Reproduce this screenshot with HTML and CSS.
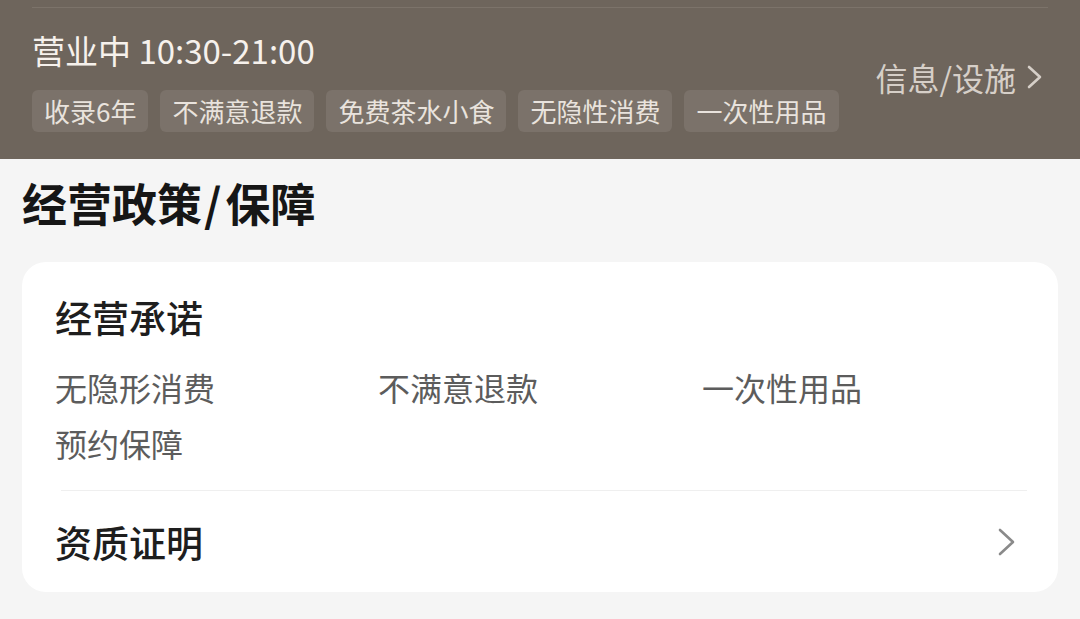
FILE: index.html
```html
<!DOCTYPE html>
<html lang="zh-CN">
<head>
  <meta charset="UTF-8">
  <meta name="viewport" content="width=device-width, initial-scale=1.0">
  <title>经营政策/保障</title>
  <link rel="stylesheet" href="styles.css">
</head>
<body>
  <div id="cabecalho">
    <div class="linha-topo"></div>
    <div class="cabecalho-corpo">
      <div class="cabecalho-info">
        <p class="horario">营业中 10:30-21:00</p>
        <div class="tags">
          <span class="tag">收录6年</span>
          <span class="tag">不满意退款</span>
          <span class="tag">免费茶水小食</span>
          <span class="tag">无隐性消费</span>
          <span class="tag">一次性用品</span>
        </div>
      </div>
      <a class="link-info">信息/设施
        <svg width="18" height="28" viewBox="0 0 18 28"><path d="M3 4 L14 14 L3 24" fill="none" stroke="#d6cfc8" stroke-width="2.6" stroke-linecap="round" stroke-linejoin="round"/></svg>
      </a>
    </div>
  </div>

  <div id="politicas">
    <h2>经营政策<span class="barra">/</span>保障</h2>
    <div class="cartao">
      <h3>经营承诺</h3>
      <div class="itens">
        <span>无隐形消费</span>
        <span>不满意退款</span>
        <span>一次性用品</span>
        <span>预约保障</span>
      </div>
      <div class="divisor"></div>
      <div class="linha-link">
        <span>资质证明</span>
        <svg width="20" height="30" viewBox="0 0 20 30"><path d="M3 3 L16 15 L3 27" fill="none" stroke="#8a8a8a" stroke-width="2.6" stroke-linecap="round" stroke-linejoin="round"/></svg>
      </div>
    </div>
  </div>
</body>
</html>
```

FILE: styles.css
```css
body {
  font-family: "Noto Sans CJK SC", "Noto Sans", sans-serif;
  margin: 0;
  padding: 0;
  width: 1080px;
  height: 619px;
  overflow: hidden;
  background-color: #f5f5f5;
}

#cabecalho {
  height: 159px;
  background-color: #6e655c;
  padding: 7px 32px 0 32px;
  box-sizing: border-box;
}

.linha-topo {
  height: 1px;
  background-color: #7c736a;
}

.cabecalho-corpo {
  display: flex;
  align-items: center;
  justify-content: space-between;
}

.horario {
  margin: 21px 0 0 0;
  font-size: 33px;
  line-height: 42px;
  color: #f6f1ec;
}

.tags {
  display: flex;
  gap: 12px;
  margin-top: 19px;
}

.tag {
  background-color: #7b726a;
  border-radius: 6px;
  padding: 0 12px;
  height: 42px;
  line-height: 42px;
  font-size: 26px;
  color: #e9e3dd;
}

.link-info {
  display: flex;
  align-items: center;
  gap: 10px;
  font-size: 32px;
  color: #d6cfc8;
  margin-top: 14px;
  margin-right: 4px;
}

#politicas {
  padding: 15px 22px 0 22px;
}

#politicas h2 {
  margin: 0 0 30px 0;
  font-size: 45px;
  line-height: 58px;
  font-weight: bold;
  color: #161616;
}

.barra {
  margin: 0 4px 0 2px;
}

.cartao {
  background-color: #ffffff;
  border-radius: 24px;
  padding: 31px 41px 0 33px;
}

.cartao h3 {
  margin: 0 0 18px 0;
  font-size: 37px;
  line-height: 48px;
  font-weight: 500;
  color: #1e1e1e;
}

.itens {
  display: grid;
  grid-template-columns: 323px 324px 1fr;
  font-size: 32px;
  line-height: 56px;
  color: #5c5c5c;
}

.divisor {
  height: 1px;
  background-color: #efefef;
  margin: 19px -10px 0 6px;
}

.linha-link {
  height: 101px;
  display: flex;
  align-items: center;
  justify-content: space-between;
  font-size: 37px;
  font-weight: 500;
  color: #1e1e1e;
}
```
